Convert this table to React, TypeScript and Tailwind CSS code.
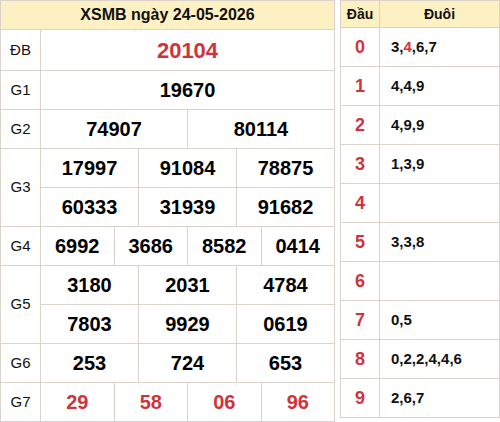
import React from "react";

const B = "border-[#d9d3cc]";

function Cells({ nums, red, big }: { nums: string[]; red?: boolean; big?: boolean }) {
  return (
    <div className="flex flex-1 h-full">
      {nums.map((n, i) => (
        <div
          key={i}
          className={`flex-1 flex items-center justify-center font-bold ${B} ${i < nums.length - 1 ? "border-r" : ""} ${
            red ? "text-[#d0343b]" : "text-black"
          } ${big ? "text-[22px]" : "text-[20px]"}`}
        >
          {n}
        </div>
      ))}
    </div>
  );
}

function Row({ label, nums, red, big, h = "h-[39px]" }: { label: string; nums: string[]; red?: boolean; big?: boolean; h?: string }) {
  return (
    <div className={`flex ${h} border-b ${B}`}>
      <div className={`w-[40px] shrink-0 border-r ${B} flex items-center justify-center text-[15px] text-[#111]`}>{label}</div>
      <Cells nums={nums} red={red} big={big} />
    </div>
  );
}

function DoubleRow({ label, a, b }: { label: string; a: string[]; b: string[] }) {
  return (
    <div className={`flex h-[78px] border-b ${B}`}>
      <div className={`w-[40px] shrink-0 border-r ${B} flex items-center justify-center text-[15px] text-[#111]`}>{label}</div>
      <div className="flex flex-col flex-1">
        <div className={`h-[39px] border-b ${B} flex`}>
          <Cells nums={a} />
        </div>
        <div className="h-[38px] flex">
          <Cells nums={b} />
        </div>
      </div>
    </div>
  );
}

const loto: { d: string; t: React.ReactNode }[] = [
  { d: "0", t: (<>3,<span className="text-[#d0343b]">4</span>,6,7</>) },
  { d: "1", t: "4,4,9" },
  { d: "2", t: "4,9,9" },
  { d: "3", t: "1,3,9" },
  { d: "4", t: "" },
  { d: "5", t: "3,3,8" },
  { d: "6", t: "" },
  { d: "7", t: "0,5" },
  { d: "8", t: "0,2,2,4,4,6" },
  { d: "9", t: "2,6,7" },
];

export default function App() {
  return (
    <div className="w-[500px] h-[422px] bg-white flex gap-[5px] items-start" style={{ fontFamily: '"Liberation Sans", Arial, sans-serif' }}>
      <div className={`w-[335px] border-l border-t border-r ${B}`}>
        <div className={`h-[29px] border-b ${B} bg-[#fdf1c3] flex items-center justify-center font-bold text-[16px] text-[#111]`}>
          XSMB ngày 24-05-2026
        </div>
        <Row label="ĐB" nums={["20104"]} red big h="h-[41px]" />
        <Row label="G1" nums={["19670"]} />
        <Row label="G2" nums={["74907", "80114"]} />
        <DoubleRow label="G3" a={["17997", "91084", "78875"]} b={["60333", "31939", "91682"]} />
        <Row label="G4" nums={["6992", "3686", "8582", "0414"]} />
        <DoubleRow label="G5" a={["3180", "2031", "4784"]} b={["7803", "9929", "0619"]} />
        <Row label="G6" nums={["253", "724", "653"]} />
        <Row label="G7" nums={["29", "58", "06", "96"]} red />
      </div>
      <div className={`w-[160px] border-l border-t border-r ${B}`}>
        <div className={`h-[27px] border-b ${B} bg-[#fdf1c3] flex font-bold text-[14px] text-[#111]`}>
          <div className={`w-[39px] border-r ${B} flex items-center justify-center`}>Đầu</div>
          <div className="flex-1 flex items-center justify-center">Đuôi</div>
        </div>
        {loto.map((r) => (
          <div key={r.d} className={`h-[39px] border-b ${B} flex`}>
            <div className={`w-[39px] border-r ${B} flex items-center justify-center font-bold text-[18px] text-[#d0343b]`}>{r.d}</div>
            <div className="flex-1 flex items-center pl-[11px] font-bold text-[15px] text-[#111]">{r.t}</div>
          </div>
        ))}
      </div>
    </div>
  );
}
